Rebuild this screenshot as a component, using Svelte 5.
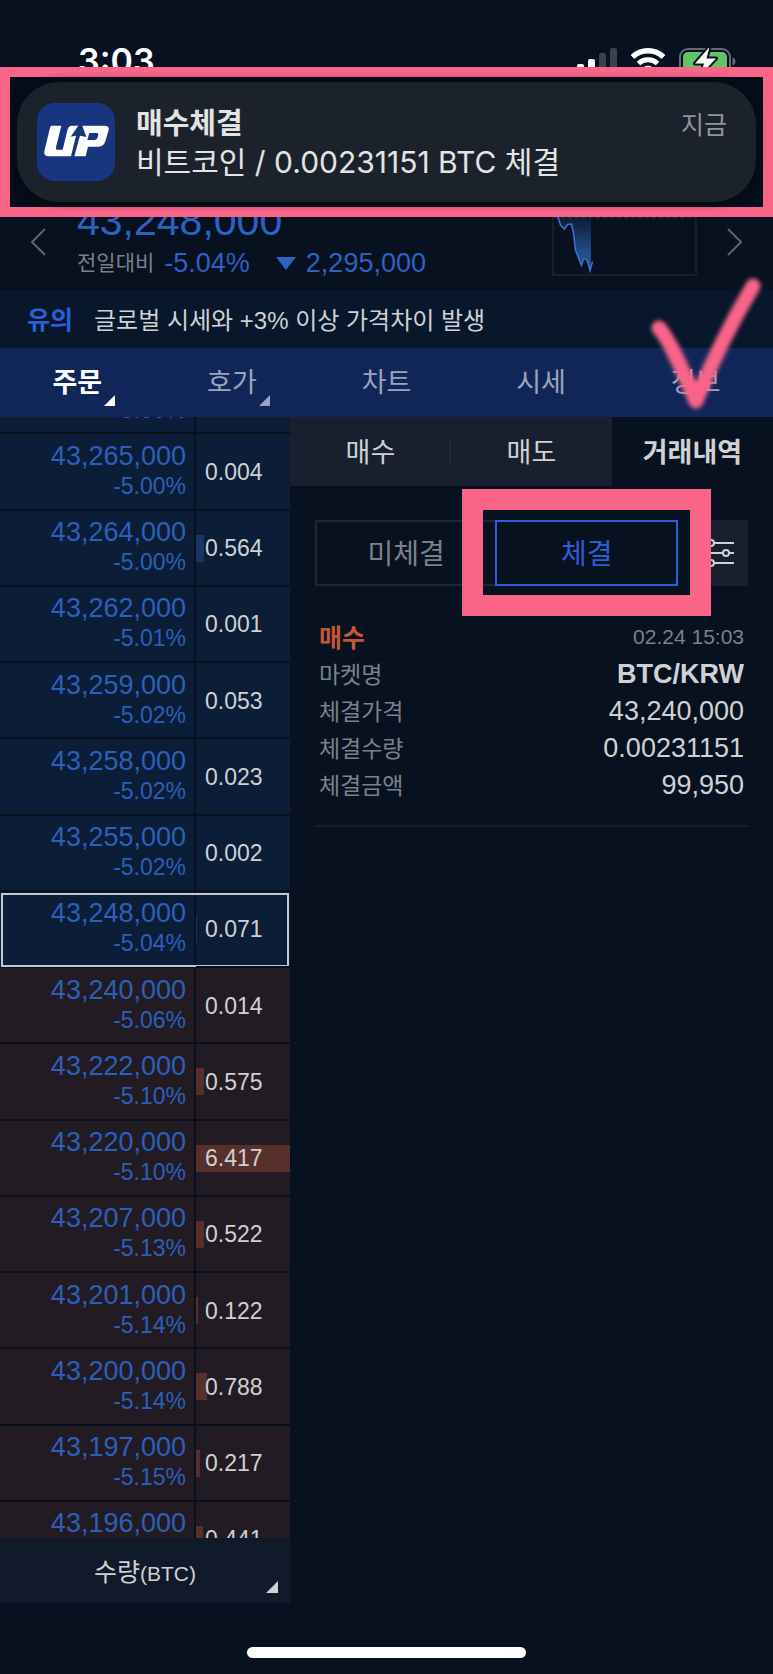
<script>
  const menu = [
    { label: '주문', active: true, more: true },
    { label: '호가', more: true },
    { label: '차트' },
    { label: '시세' },
    { label: '정보' }
  ];

  const tabs = [
    { label: '매수' },
    { label: '매도' },
    { label: '거래내역', active: true }
  ];

  const rows = [
    { price: '43,266,000', rate: '-5.00%', qty: '', side: 'ask', bar: 0 },
    { price: '43,265,000', rate: '-5.00%', qty: '0.004', side: 'ask', bar: 0 },
    { price: '43,264,000', rate: '-5.00%', qty: '0.564', side: 'ask', bar: 9 },
    { price: '43,262,000', rate: '-5.01%', qty: '0.001', side: 'ask', bar: 0 },
    { price: '43,259,000', rate: '-5.02%', qty: '0.053', side: 'ask', bar: 0 },
    { price: '43,258,000', rate: '-5.02%', qty: '0.023', side: 'ask', bar: 0 },
    { price: '43,255,000', rate: '-5.02%', qty: '0.002', side: 'ask', bar: 0 },
    { price: '43,248,000', rate: '-5.04%', qty: '0.071', side: 'ask', bar: 1, current: true },
    { price: '43,240,000', rate: '-5.06%', qty: '0.014', side: 'bid', bar: 0 },
    { price: '43,222,000', rate: '-5.10%', qty: '0.575', side: 'bid', bar: 9 },
    { price: '43,220,000', rate: '-5.10%', qty: '6.417', side: 'bid', bar: 100 },
    { price: '43,207,000', rate: '-5.13%', qty: '0.522', side: 'bid', bar: 8 },
    { price: '43,201,000', rate: '-5.14%', qty: '0.122', side: 'bid', bar: 2 },
    { price: '43,200,000', rate: '-5.14%', qty: '0.788', side: 'bid', bar: 12 },
    { price: '43,197,000', rate: '-5.15%', qty: '0.217', side: 'bid', bar: 4 },
    { price: '43,196,000', rate: '-5.15%', qty: '0.441', side: 'bid', bar: 7 }
  ];

  const details = [
    { label: '마켓명', value: 'BTC/KRW', strong: true },
    { label: '체결가격', value: '43,240,000' },
    { label: '체결수량', value: '0.00231151' },
    { label: '체결금액', value: '99,950' }
  ];
</script>

<div class="app">
  <header>
    <div class="status">
      <time>3:03</time>
      <div class="status-icons">
        <svg width="41" height="28" viewBox="0 0 41 28" aria-hidden="true">
          <rect x="1" y="16" width="7" height="8" rx="2" fill="#fff" />
          <rect x="12" y="11" width="7" height="13" rx="2" fill="#fff" />
          <rect x="23" y="5" width="7" height="19" rx="2" fill="#3a404c" />
          <rect x="34" y="0" width="7" height="24" rx="2" fill="#3a404c" />
        </svg>
        <svg width="36" height="28" viewBox="0 0 36 28" aria-hidden="true">
          <path d="M2.500 9a22.500 22.500 0 0 1 31 0" fill="none" stroke="#fff" stroke-width="5.500" />
          <path d="M8.500 15.500a14 14 0 0 1 19 0" fill="none" stroke="#fff" stroke-width="5" />
          <path d="M12.500 20a8 8 0 0 1 11 0L18 25.500z" fill="#fff" />
        </svg>
        <svg width="58" height="28" viewBox="0 0 58 28" aria-hidden="true">
          <rect x="1" y="1" width="50" height="26" rx="8" fill="none" stroke="#656b76" stroke-width="2" />
          <rect x="4" y="4" width="44" height="20" rx="5" fill="#62c466" />
          <path d="M53.500 9.500v8c4-1 4-7 0-8z" fill="#656b76" />
          <path d="M30.500-1 16 15.500h9L21.500 27 37 10.500H27.500z" fill="#fff" stroke="#07111e" stroke-width="4" stroke-linejoin="round" paint-order="stroke" />
        </svg>
      </div>
    </div>

    <div class="coin">
      <button class="arrow" aria-label="이전">
        <svg width="15" height="28" viewBox="0 0 15 28"><path d="M14 1 1 14l13 13" fill="none" stroke="#5d636e" stroke-width="2" /></svg>
      </button>
      <div class="quote">
        <strong>43,248,000</strong>
        <p>
          <span class="base">전일대비</span>
          <span>-5.04%</span>
          <svg width="20" height="13" viewBox="0 0 20 13" aria-hidden="true"><path d="M0 0h20L10 13z" fill="#2c62c4" /></svg>
          <span>2,295,000</span>
        </p>
      </div>
      <svg class="chart" width="145" height="80" viewBox="0 0 145 80" aria-hidden="true">
        <defs>
          <linearGradient id="area" x1="0" y1="0" x2="0" y2="1">
            <stop offset="0" stop-color="#2c62b4" stop-opacity="0.100" />
            <stop offset="0.700" stop-color="#2c62b4" stop-opacity="0.750" />
            <stop offset="1" stop-color="#2c62b4" stop-opacity="0.850" />
          </linearGradient>
        </defs>
        <rect x="1" y="1" width="143" height="78" fill="none" stroke="#181f2c" stroke-width="2" />
        <path d="M2 22h141" stroke="#2b3342" stroke-dasharray="4 3" />
        <path d="M5 20 8 29l4 4 3-5h4l3 9 1 16 6 16 3-7 3 1 3 11 1-9V20z" fill="url(#area)" />
        <path d="M5 18 8.500 29l4 4 3-4.500 4-.500 2 9 2 17 6 15.500 2-6.500h2.500l2 3.500 2 8 2.500-9" fill="none" stroke="#3a74d4" stroke-width="1.500" />
      </svg>
      <button class="arrow" aria-label="다음">
        <svg width="15" height="28" viewBox="0 0 15 28"><path d="m1 1 13 13L1 27" fill="none" stroke="#5d636e" stroke-width="2" /></svg>
      </button>
    </div>

    <section class="alert">
      <div class="push">
        <div class="logo">
          <svg width="80" height="55" viewBox="0 0 240 165" aria-hidden="true">
            <path fill="#fff" d="M42 32H73L57 97Q55 104 61 104H77L92 43Q95 32 105 32H124L101 65L117 62L102 124H35Q19 124 22 109L38 43Q40 32 42 32Z" />
            <path fill="#fff" fill-rule="evenodd" d="M136 32H202Q219 32 215 46L205 79Q200 95 184 95H153L146 124H112L129 62L148 66ZM157 54L151 75H173Q179 75 181 69L184 60Q185 54 179 54Z" />
          </svg>
        </div>
        <div class="push-text">
          <strong>매수체결</strong>
          <span>비트코인 / 0.00231151 BTC 체결</span>
        </div>
        <time>지금</time>
      </div>
    </section>
  </header>

  <p class="notice"><strong>유의</strong><span>글로벌 시세와 +3% 이상 가격차이 발생</span></p>

  <nav>
    {#each menu as item}
      <button class:active={item.active}>
        <span class="label">{item.label}{#if item.more}<i class="corner"></i>{/if}</span>
      </button>
    {/each}
    <svg class="tick" width="140" height="160" viewBox="0 0 140 160" aria-hidden="true">
      <path d="M26 63C37 76 48 102 63 136C76 104 98 58 120 21" fill="none" stroke="#f96489" stroke-width="15" stroke-linecap="round" stroke-linejoin="round" />
    </svg>
  </nav>

  <main>
    <section class="book">
      <div class="scroll">
        <table>
          <tbody>
            {#each rows as row}
              <tr class={row.side} class:current={row.current}>
                <td class="price"><b>{row.price}</b><span>{row.rate}</span></td>
                <td class="qty"><i class="bar" style="width: {row.bar}%"></i><span>{row.qty}</span></td>
              </tr>
            {/each}
          </tbody>
        </table>
      </div>
      <button class="unit"><span>수량<small>(BTC)</small></span><i class="corner"></i></button>
    </section>

    <section class="history">
      <div class="tabs">
        {#each tabs as tab}
          <button class:active={tab.active}>{tab.label}</button>
        {/each}
      </div>
      <div class="filters">
        <button class="open">미체결</button>
        <div class="mark"><button class="done">체결</button></div>
        <button class="tune" aria-label="필터">
          <svg width="30" height="28" viewBox="0 0 30 28">
            <g fill="#18202f" stroke="#cfd1d4" stroke-width="2">
              <path d="M1 4h29M1 14h29M1 24h29" />
              <circle cx="7" cy="4" r="3" /><circle cx="22" cy="14" r="3" /><circle cx="7" cy="24" r="3" />
            </g>
          </svg>
        </button>
      </div>
      <article>
        <div class="line"><strong class="buy">매수</strong><time>02.24 15:03</time></div>
        {#each details as item}
          <div class="line"><span>{item.label}</span><b class:strong={item.strong}>{item.value}</b></div>
        {/each}
      </article>
    </section>
  </main>

  <footer><div class="home"></div></footer>
</div>

<style>
  :global(body) {
    margin: 0;
    background: #08111f;
  }

  .app {
    display: flex;
    flex-direction: column;
    height: 100vh;
    overflow: hidden;
    background: #08111f;
    color: #cfd1d4;
    font-family: 'Liberation Sans', 'Noto Sans CJK KR', sans-serif;
    font-size: 27px;
  }

  .app :global(*) {
    box-sizing: border-box;
  }

  svg {
    display: block;
  }

  button {
    margin: 0;
    padding: 0;
    border: 0;
    background: none;
    color: inherit;
    font: inherit;
  }

  p {
    margin: 0;
  }

  header {
    position: relative;
    flex: none;
  }

  .status {
    display: flex;
    justify-content: space-between;
    height: 90px;
    padding: 48px 36px 0 78px;
    color: #fff;
  }

  .status time {
    font: 600 34px/25px Inter, sans-serif;
  }

  .status-icons {
    display: flex;
    gap: 13px;
  }

  .coin {
    display: flex;
    align-items: flex-end;
    height: 200px;
    padding: 0 31px 14px;
  }

  .arrow {
    margin-bottom: 20px;
  }

  .quote {
    flex: 1;
    padding-left: 31px;
    margin-bottom: -3px;
    color: #2c62c4;
  }

  .quote strong {
    display: block;
    font-size: 41px;
    font-weight: 400;
    line-height: 52px;
  }

  .quote p {
    display: flex;
    align-items: center;
    gap: 10px;
    font-size: 27px;
    line-height: 32px;
  }

  .quote p svg {
    margin-left: 16px;
  }

  .quote .base {
    color: #7b818b;
    font-size: 21px;
  }

  .chart {
    margin-right: 30px;
  }

  .alert {
    position: absolute;
    inset: 67px 0 auto;
    padding: 5px 7px;
    border: 10px solid #f96489;
    background: #050d1a;
  }

  .push {
    display: flex;
    align-items: flex-start;
    height: 120px;
    padding: 21px 29px 0 20px;
    border-radius: 42px;
    background: #1c222c;
    box-shadow: 0 0 8px #030914;
    color: #e3e4e5;
    font-family: Inter, 'Noto Sans CJK KR', sans-serif;
    font-size: 30px;
  }

  .push strong {
    font-size: 29px;
  }

  .logo {
    display: grid;
    place-items: center;
    flex: none;
    width: 78px;
    height: 78px;
    border-radius: 18px;
    background: #18357f;
  }

  .push-text {
    display: flex;
    flex: 1;
    flex-direction: column;
    padding: 2px 0 0 21px;
    line-height: 38px;
  }

  .push time {
    padding-top: 2px;
    color: #8e939d;
    font-size: 25px;
    line-height: 40px;
  }

  .notice {
    display: flex;
    flex: none;
    align-items: center;
    gap: 21px;
    height: 58px;
    padding: 0 27px 2px;
    background: #08172b;
    font-size: 24px;
  }

  .notice strong {
    color: #2860d8;
    font-size: 25px;
  }

  nav {
    position: relative;
    display: grid;
    flex: none;
    grid-template-columns: repeat(5, 1fr);
    height: 69px;
    background: #112658;
    color: #9aa4bb;
  }

  nav button {
    padding-bottom: 4px;
  }

  nav .active {
    color: #fff;
    font-weight: 700;
  }

  .label {
    position: relative;
  }

  .corner {
    position: absolute;
    border-style: solid;
    border-width: 0 0 11px 11px;
    border-color: transparent transparent currentColor;
  }

  .label .corner {
    right: -13px;
    bottom: -8px;
  }

  .tick {
    position: absolute;
    top: -83px;
    right: 0;
    filter: blur(2px);
  }

  main {
    display: grid;
    flex: 1;
    grid-template-columns: 3fr 5fr;
    min-height: 0;
  }

  .book {
    display: flex;
    flex-direction: column;
    min-height: 0;
  }

  .scroll {
    flex: 1;
    min-height: 0;
    overflow: hidden;
  }

  table {
    width: 100%;
    height: 1220px;
    margin-top: -59px;
    border-collapse: separate;
    border-spacing: 0;
  }

  td {
    padding: 0;
    border-bottom: 2px solid #07111d;
  }

  .ask {
    background: #0c1d37;
  }

  .bid {
    background: #231b23;
  }

  .current {
    position: relative;
    z-index: 1;
    outline: 2px solid #c3c8d0;
    outline-offset: -3px;
  }

  .price {
    width: 196px;
    padding: 0 8px 2px 0;
    border-right: 2px solid #07111d;
    color: #2c5fba;
    text-align: right;
  }

  .price b {
    display: block;
    font-size: 27px;
    font-weight: 400;
    line-height: 32px;
  }

  .price span {
    display: block;
    font-size: 23px;
    line-height: 29px;
  }

  .qty {
    position: relative;
    padding-top: 2px;
    font-size: 23px;
  }

  .qty span {
    position: relative;
    padding-left: 9px;
  }

  .bar {
    position: absolute;
    top: calc(50% - 13px);
    left: 0;
    height: 27px;
    background: #1a3565;
  }

  .bid .bar {
    background: #58302b;
  }

  .unit {
    position: relative;
    height: 65px;
    padding-bottom: 2px;
    background: #101a2a;
    font-size: 25px;
  }

  .unit small {
    font-size: 21px;
  }

  .unit .corner {
    right: 12px;
    bottom: 10px;
    border-width: 0 0 12px 12px;
  }

  .tabs {
    display: grid;
    grid-template-columns: repeat(3, 1fr);
    height: 69px;
    background: #18202f;
  }

  .tabs button {
    position: relative;
    padding-bottom: 2px;
  }

  .tabs button:first-child::after {
    content: '';
    position: absolute;
    top: 23px;
    right: 0;
    width: 2px;
    height: 23px;
    background: #212938;
  }

  .tabs .active {
    background: #08111f;
    font-weight: 700;
  }

  .filters {
    display: grid;
    grid-template-columns: 1fr 1fr 58px;
    height: 66px;
    margin: 34px 25px 0;
    font-size: 28px;
  }

  .open {
    padding: 0 5px 2px 0;
    border: 2px solid #1e2633;
    color: #7b818b;
  }

  .mark {
    position: relative;
    display: grid;
    margin: 0 12px 0 -7px;
  }

  .mark::after {
    content: '';
    position: absolute;
    inset: -31px -33px -30px;
    border: 21px solid #f96489;
    pointer-events: none;
  }

  .done {
    padding-bottom: 2px;
    border: 2px solid #2860d8;
    background: #08111f;
    color: #2860d8;
  }

  .tune {
    display: grid;
    place-items: center;
    background: #18202f;
  }

  article {
    margin: 31px 25px 0;
    padding: 0 4px 23px;
    border-bottom: 2px solid #151d2b;
  }

  .line {
    display: flex;
    align-items: center;
    justify-content: space-between;
    height: 37px;
    color: #7b818b;
    font-size: 23px;
  }

  .line b {
    padding-top: 4px;
    color: #cfd1d4;
    font-size: 27px;
    font-weight: 400;
  }

  .line .strong {
    font-weight: 700;
  }

  .line time {
    padding-top: 2px;
    font-size: 21px;
  }

  .line .buy {
    color: #c2573b;
    font-size: 25px;
  }

  footer {
    display: grid;
    flex: none;
    justify-content: center;
    align-content: center;
    grid-template-columns: 36%;
    height: 71px;
    padding-top: 27px;
  }

  .home {
    height: 11px;
    border-radius: 6px;
    background: #fff;
  }
</style>
